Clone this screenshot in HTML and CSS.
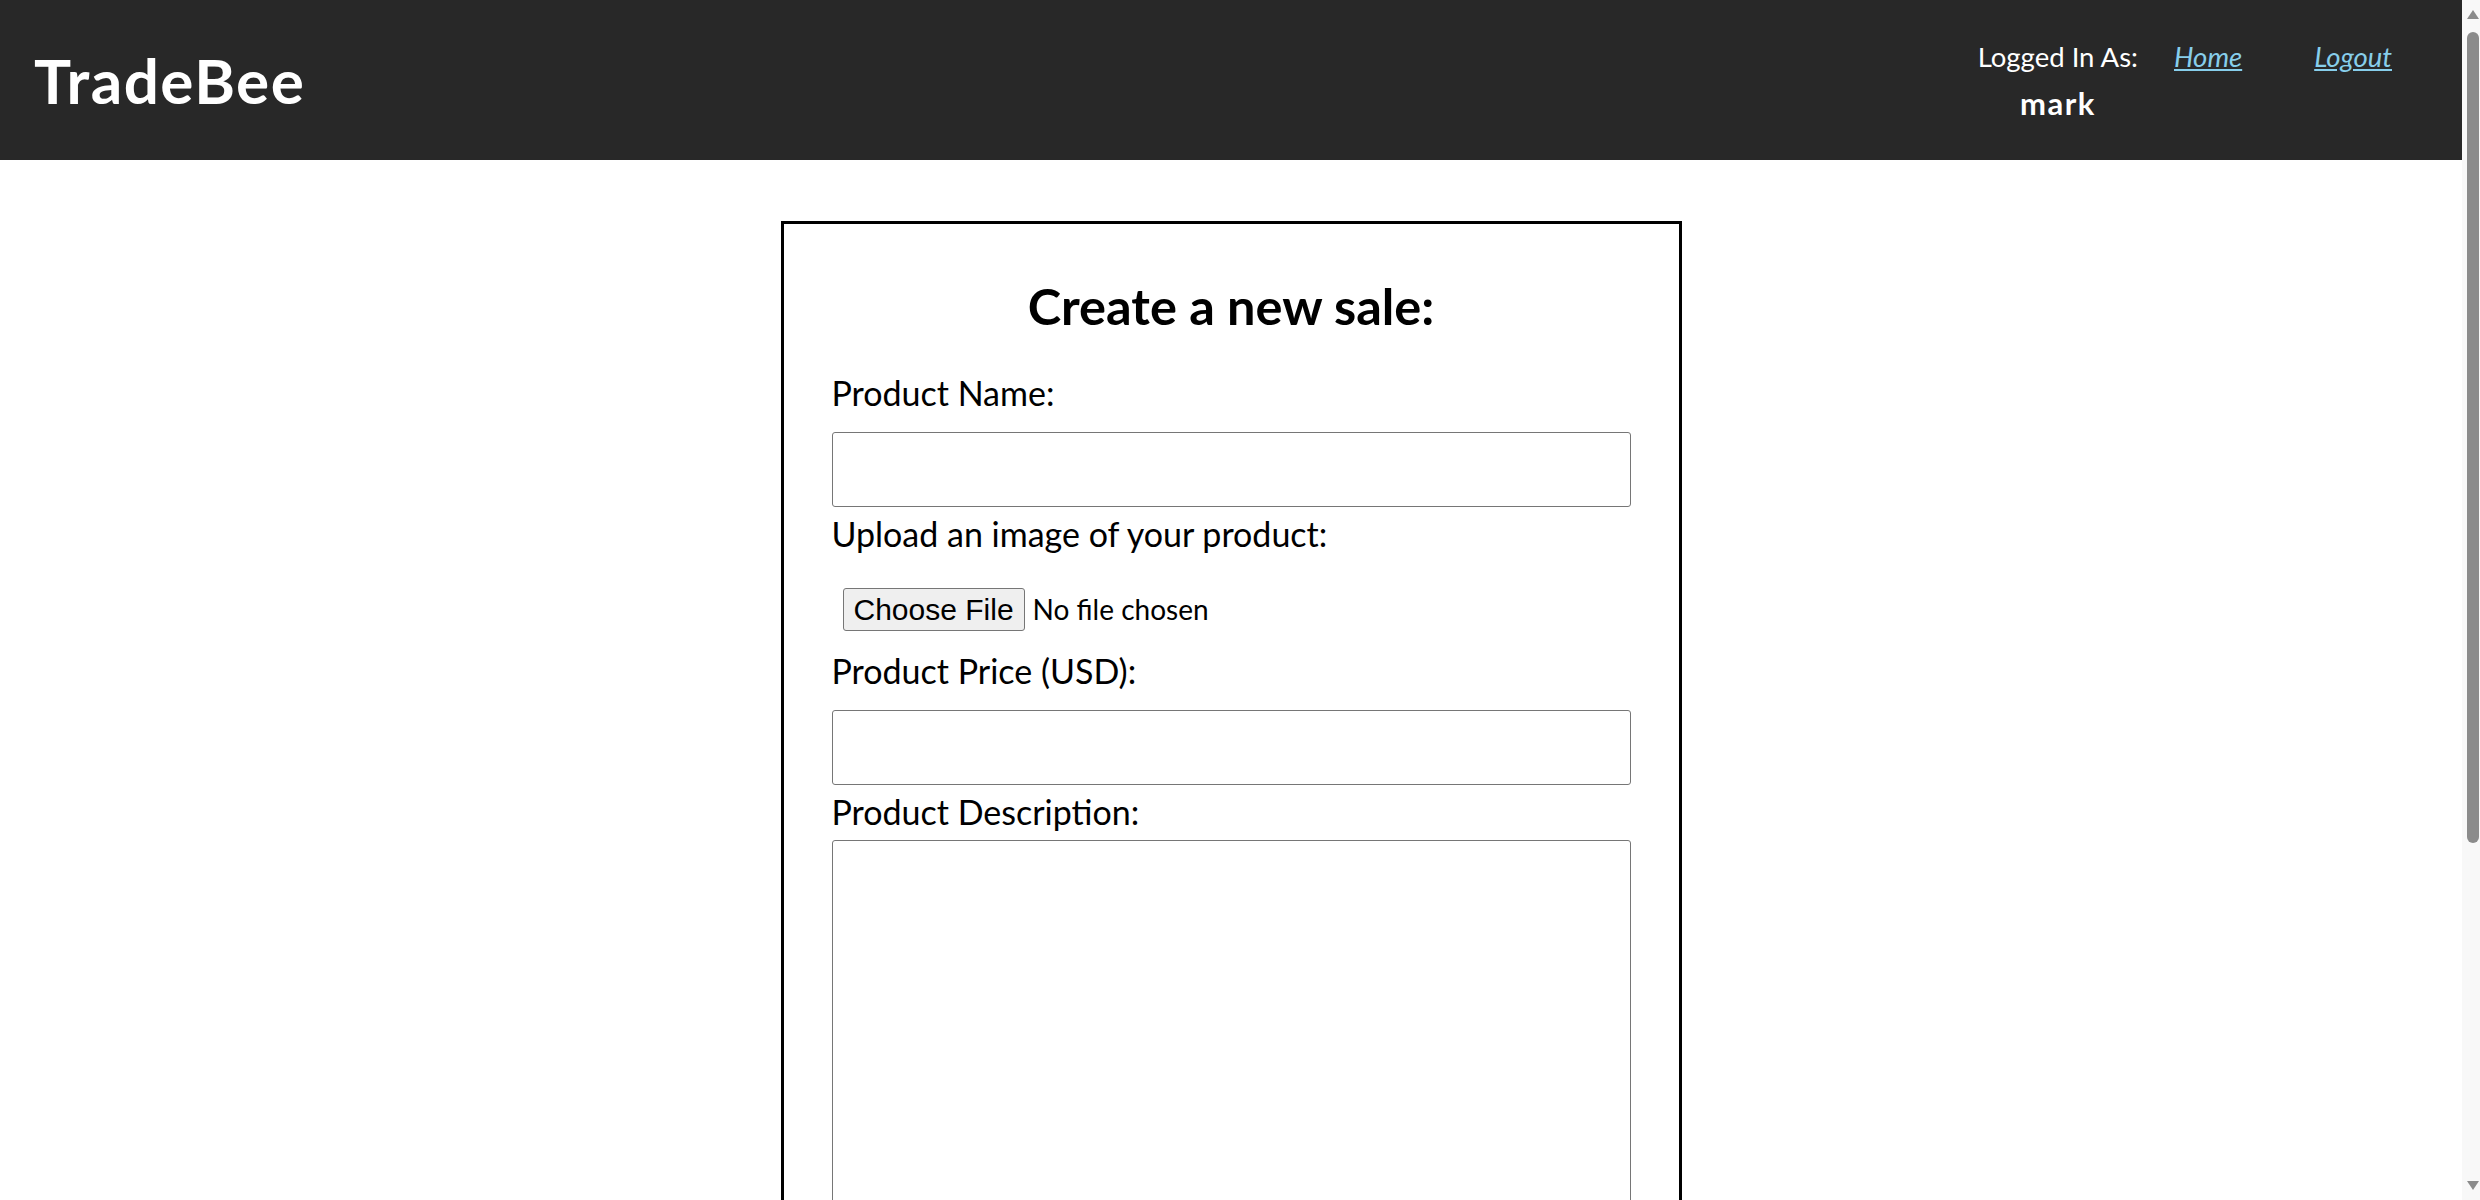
FILE: index.html
```html
<!DOCTYPE html>
<html lang="en">
<head>
<meta charset="utf-8">
<title>TradeBee - Create a new sale</title>
<link rel="stylesheet" href="styles.css">
</head>
<body>
<header class="topbar">
  <h1 class="logo">TradeBee</h1>
  <nav class="nav">
    <div class="user">
      <div>Logged In As:</div>
      <div class="username">mark</div>
    </div>
    <a class="nav-link" href="#">Home</a>
    <a class="nav-link" href="#">Logout</a>
  </nav>
</header>
<main class="page">
  <form class="sale-form">
    <h2 class="form-title">Create a new sale:</h2>
    <label class="field-label" for="name">Product Name:</label>
    <input class="field-input" type="text" id="name">
    <label class="field-label" for="image">Upload an image of your product:</label>
    <input class="file-input" type="file" id="image">
    <label class="field-label" for="price">Product Price (USD):</label>
    <input class="field-input" type="text" id="price">
    <label class="field-label" for="desc">Product Description:</label>
    <textarea class="field-area" id="desc"></textarea>
  </form>
</main>
<div class="scrollbar" aria-hidden="true">
  <div class="sb-button"><span class="sb-arrow-up"></span></div>
  <div class="sb-track"><div class="sb-thumb"></div></div>
  <div class="sb-button"><span class="sb-arrow-down"></span></div>
</div>
</body>
</html>
```
FILE: styles.css
```css
html, body {
  margin: 0;
  padding: 0;
}
body {
  background: #ffffff;
  color: #000000;
  font-family: Lato, "Liberation Sans", sans-serif;
  padding-right: 18px;
}

/* window scrollbar replica */
.scrollbar {
  position: fixed;
  top: 0;
  right: 0;
  width: 18px;
  height: 100vh;
  background: #f8f8f8;
  display: flex;
  flex-direction: column;
}
.sb-button {
  height: 28px;
  flex: none;
  display: flex;
  justify-content: flex-start;
  padding-left: 5px;
  box-sizing: border-box;
}
.sb-arrow-up {
  margin-top: 10px;
  width: 0;
  height: 0;
  border-left: 6px solid transparent;
  border-right: 6px solid transparent;
  border-bottom: 9px solid #8b8b8b;
}
.sb-arrow-down {
  margin-top: 9px;
  width: 0;
  height: 0;
  border-left: 6px solid transparent;
  border-right: 6px solid transparent;
  border-top: 9px solid #8b8b8b;
}
.sb-track {
  flex: 1;
  padding: 4px 1px 0 5px;
}
.sb-thumb {
  height: 811px;
  background: #8b8b8b;
  border-radius: 6px;
}

.topbar {
  height: 160px;
  background: #282828;
  color: #ffffff;
  display: flex;
  align-items: center;
  justify-content: space-between;
  padding: 0 36px 0 34px;
}
.logo {
  margin: 0;
  font-size: 62px;
  font-weight: 700;
  letter-spacing: 1.5px;
  line-height: 72px;
}
.nav {
  display: flex;
  align-items: flex-start;
  font-size: 27.5px;
  line-height: 46px;
}
.user {
  text-align: center;
}
.username {
  font-weight: 700;
  font-size: 31px;
  letter-spacing: 1.5px;
}
.nav-link {
  color: #87ceeb;
  font-style: italic;
  text-decoration: underline;
  padding: 0 0 0 72px;
}
.nav-link:first-of-type {
  padding-left: 36px;
}
.nav-link:last-child {
  padding-right: 34px;
}
.page {
  padding: 61px 0 227px;
}
.sale-form {
  width: 901px;
  box-sizing: border-box;
  margin: 0 auto;
  border: 3px solid #000000;
  padding: 0 48px 48px;
}
.form-title {
  margin: 54px 0 38px;
  text-align: center;
  font-size: 50.5px;
  font-weight: 700;
  line-height: 56px;
}
.field-label {
  display: block;
  font-size: 34px;
  line-height: 42px;
}
.field-input {
  display: block;
  box-sizing: border-box;
  width: 100%;
  height: 75px;
  margin: 18px 0 6px;
  border: 1px solid #767676;
  border-radius: 3px;
  font-size: 30px;
  font-family: inherit;
  padding: 0 8px;
}
.file-input {
  display: block;
  margin: 33px 0 19px 11px;
  font-family: Lato, "Liberation Sans", sans-serif;
  font-size: 28px;
  line-height: 34px;
}
.file-input::file-selector-button {
  font-family: "Liberation Sans", Arial, sans-serif;
  font-size: 30px;
  line-height: 35px;
  height: 43px;
  padding: 2px 10px;
  margin-right: 8px;
  border: 1px solid #767676;
  border-radius: 3px;
  background: #efefef;
  color: #000000;
}
.field-area {
  display: block;
  box-sizing: border-box;
  width: 100%;
  height: 560px;
  margin: 7px 0 0;
  border: 1px solid #767676;
  border-radius: 3px;
  font-family: inherit;
  font-size: 30px;
  resize: vertical;
}
```
